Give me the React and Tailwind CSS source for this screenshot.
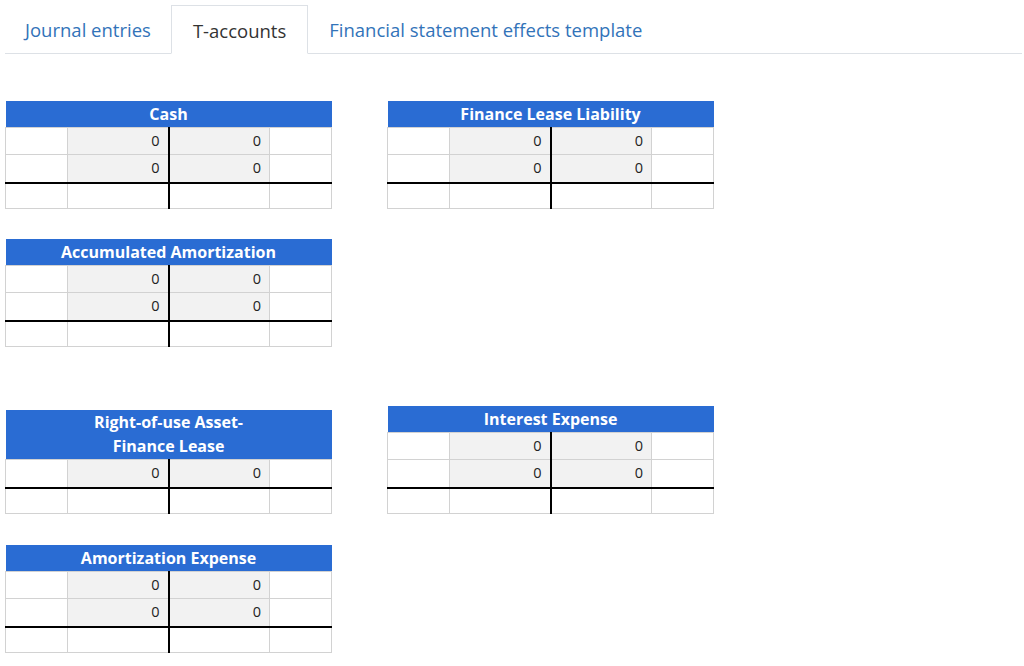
import React from 'react';

const font = { fontFamily: '"Open Sans", "Noto Sans", sans-serif' };

function TAccount({ title, rows = 2, tall = false }) {
  const data = Array.from({ length: rows });
  return (
    <table className="border-collapse table-fixed w-[326px] text-[14.5px] text-[#222]">
      <colgroup>
        <col className="w-[62px]" />
        <col className="w-[101px]" />
        <col className="w-[101px]" />
        <col className="w-[62px]" />
      </colgroup>
      <thead>
        <tr>
          <th colSpan={4} className={`bg-[#2a6cd3] text-white font-bold text-[16px] ${tall ? 'leading-[23.5px]' : 'leading-[24px]'} py-[1px] px-2 text-center`}>
            {title}
          </th>
        </tr>
      </thead>
      <tbody>
        {data.map((_, i) => {
          const last = i === rows - 1;
          return (
            <tr key={i} className={last ? 'h-[28px]' : 'h-[27px]'}>
              <td className={`border border-[#d2d2d2] ${last ? 'border-b-2 border-b-black' : ''}`}></td>
              <td className={`border border-[#d2d2d2] bg-[#f2f2f2] text-right pr-[8px] border-r-2 border-r-black ${last ? 'border-b-2 border-b-black' : ''}`}>0</td>
              <td className={`border border-[#d2d2d2] bg-[#f2f2f2] text-right pr-[8px] ${last ? 'border-b-2 border-b-black' : ''}`}>0</td>
              <td className={`border border-[#d2d2d2] ${last ? 'border-b-2 border-b-black' : ''}`}></td>
            </tr>
          );
        })}
        <tr className="h-[26px]">
          <td className="border border-[#d2d2d2]"></td>
          <td className="border border-[#d2d2d2] border-r-2 border-r-black"></td>
          <td className="border border-[#d2d2d2]"></td>
          <td className="border border-[#d2d2d2]"></td>
        </tr>
      </tbody>
    </table>
  );
}

export default function App() {
  return (
    <div className="w-[1024px] h-[666px] bg-white overflow-hidden" style={font}>
      {/* Tabs */}
      <div className="flex mx-[5px] mt-[5px] border-b border-[#dde1e6] mr-[2px]">
        <div className="px-[20px] pt-[2px] h-[48px] flex items-center text-[18.5px] text-[#3273b9]">Journal entries</div>
        <div className="px-[21px] pt-[2px] h-[49px] -mb-px flex items-center text-[18.5px] text-[#333] bg-white border border-[#dde1e6] border-b-white">T-accounts</div>
        <div className="px-[21px] pt-[2px] h-[48px] flex items-center text-[18.5px] text-[#3273b9]">Financial statement effects template</div>
      </div>

      {/* T-accounts */}
      <div className="pl-[5px] pt-[47px]">
        <div className="flex items-start gap-[55px]">
          <TAccount title="Cash" />
          <TAccount title="Finance Lease Liability" />
        </div>
        <div className="flex items-start gap-[55px] mt-[30px]">
          <TAccount title="Accumulated Amortization" />
        </div>
        <div className="flex gap-[55px] items-end mt-[59px]">
          <TAccount title={<>Right-of-use Asset-<br />Finance Lease</>} rows={1} tall />
          <TAccount title="Interest Expense" />
        </div>
        <div className="flex items-start gap-[55px] mt-[31px]">
          <TAccount title="Amortization Expense" />
        </div>
      </div>
    </div>
  );
}
